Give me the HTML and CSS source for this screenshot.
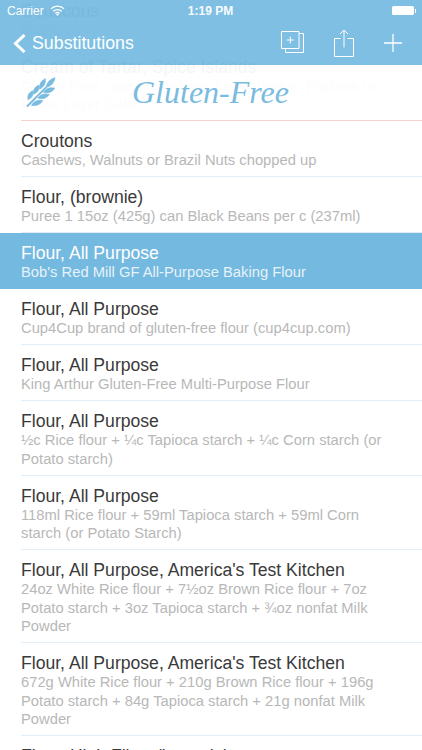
FILE: index.html
```html
<!DOCTYPE html>
<html lang="en">
<head>
<meta charset="utf-8">
<title>Gluten-Free Substitutions</title>
<link rel="stylesheet" href="styles.css">
</head>
<body>
<div class="screen">
  <ul class="list">
    <li class="row"><div class="title">Couscous</div><div class="sub">Quinoa</div></li>
    <li class="row row-cat"><div class="title">Cream of Tartar, Spice Islands</div><div class="sub">Gluten-Free, use with Whites for Meringue, Pavlove or Pillow Layer Cake</div></li>
    <li class="row"><div class="title">Croutons</div><div class="sub">Cashews, Walnuts or Brazil Nuts chopped up</div></li>
    <li class="row"><div class="title">Flour, (brownie)</div><div class="sub">Puree 1 15oz (425g) can Black Beans per c (237ml)</div></li>
    <li class="row selected"><div class="title">Flour, All Purpose</div><div class="sub">Bob's Red Mill GF All-Purpose Baking Flour</div></li>
    <li class="row"><div class="title">Flour, All Purpose</div><div class="sub">Cup4Cup brand of gluten-free flour (cup4cup.com)</div></li>
    <li class="row"><div class="title">Flour, All Purpose</div><div class="sub">King Arthur Gluten-Free Multi-Purpose Flour</div></li>
    <li class="row"><div class="title">Flour, All Purpose</div><div class="sub">½c Rice flour + ¼c Tapioca starch + ¼c Corn starch (or Potato starch)</div></li>
    <li class="row"><div class="title">Flour, All Purpose</div><div class="sub">118ml Rice flour + 59ml Tapioca starch + 59ml Corn starch (or Potato Starch)</div></li>
    <li class="row"><div class="title">Flour, All Purpose, America's Test Kitchen</div><div class="sub">24oz White Rice flour + 7½oz Brown Rice flour + 7oz Potato starch + 3oz Tapioca starch + ¾oz nonfat Milk Powder</div></li>
    <li class="row"><div class="title">Flour, All Purpose, America's Test Kitchen</div><div class="sub">672g White Rice flour + 210g Brown Rice flour + 196g Potato starch + 84g Tapioca starch + 21g nonfat Milk Powder</div></li>
    <li class="row"><div class="title">Flour, High Fiber (brownie)</div></li>
  </ul>

  <header class="top">
    <div class="status">
      <div class="status-left">
        <span>Carrier</span>
        <svg class="wifi" viewBox="0 0 18 13" aria-hidden="true"><path d="M1 4.600a11.500 11.500 0 0 1 16 0M3.800 7.400a7.500 7.500 0 0 1 10.400 0M6.400 10a3.800 3.800 0 0 1 5.200 0" fill="none" stroke="#fff" stroke-width="1.500"/><path d="M9 13l-1.700-2a2.400 2.400 0 0 1 3.400 0z" fill="#fff"/></svg>
      </div>
      <div class="status-time">1:19 PM</div>
      <div class="status-right"><span class="battery"></span><span class="battery-tip"></span></div>
    </div>
    <nav class="nav">
      <a class="back">
        <svg class="chevron" viewBox="0 0 13 19" aria-hidden="true"><path d="M11.500 1L2.500 9.500l9 8.500" fill="none" stroke="#fff" stroke-width="3"/></svg>
        <span>Substitutions</span>
      </a>
      <div class="actions">
        <svg class="ico ico-dup" viewBox="0 0 23 22" aria-hidden="true"><g fill="none" stroke="#fff" stroke-width="1"><path d="M.5.500h17.500v17H.5z"/><path d="M18 2.500h4.500v19h-18v-4"/><path d="M9.250 5.500v7M5.750 9h7"/></g></svg>
        <svg class="ico ico-share" viewBox="0 0 20 28" aria-hidden="true"><g fill="none" stroke="#fff" stroke-width="1"><path d="M6.500 9.500H.5v18h19v-18h-6"/><path d="M10 18.500V1M6 5l4-4 4 4"/></g></svg>
        <svg class="ico ico-plus" viewBox="0 0 18 18" aria-hidden="true"><path d="M9 0v18M0 9h18" fill="none" stroke="#fff" stroke-width="1.300"/></svg>
      </div>
    </nav>
    <div class="banner">
      <svg class="wheat" viewBox="0 0 32 31" aria-hidden="true">
        <path class="stem" d="M1 30L21 10"/>
        <g class="leaves">
          <path d="M20.700 10.300Q28.500 8.300 30 .3Q22.100 2.300 20.700 10.300z"/>
          <path d="M14 12Q20.600 9.100 20 1.300Q13.400 4.100 14 12z"/>
          <path d="M18 15.300Q25.900 17 29.700 11Q21.800 9.300 18 15.300z"/>
          <path d="M8 17Q14.200 15 13.300 8Q7 10 8 17z"/>
          <path d="M12.300 21.300Q20 23.300 24 17.500Q16.200 15.500 12.300 21.300z"/>
          <path d="M2 22.700Q8.200 20.700 7.300 13.700Q1.100 15.700 2 22.700z"/>
          <path d="M5.700 28.700Q13.700 30 17.300 23.700Q9.300 22.400 5.700 28.700z"/>
        </g>
      </svg>
      <span class="brand">Gluten-Free</span>
    </div>
  </header>
</div>
</body>
</html>
```
FILE: styles.css
```css
* { box-sizing: border-box; }
html, body { margin: 0; padding: 0; }
body { background: #fff; font-family: "Liberation Sans", Arial, sans-serif; }
.screen { position: relative; width: 422px; height: 750px; overflow: hidden; background: #fff; }

.list { list-style: none; margin: -9.500px 0 0; padding: 0; }
.row { position: relative; padding: 10px 20px 7.500px 21px; color: #3a3a3a; }
.row::after { content: ""; position: absolute; left: 21px; right: 0; bottom: 0; height: 1px; background: #dfeef7; }
.row-cat::after { background: #f6cfcf; }
.title { font-size: 17.600px; line-height: 20px; }
.sub { font-size: 14.750px; line-height: 18.500px; color: #b8b8b8; }
.selected { background: #74b9df; color: #fff; }
.selected .sub { color: #e6f2fa; }
.selected::after { display: none; }

.top { position: absolute; top: 0; left: 0; right: 0; }
.status { height: 21px; background: rgba(122, 189, 226, .97); display: flex; align-items: center; justify-content: space-between; padding: 0 6px 0 7px; color: #fff; font-size: 12px; position: relative; }
.status-left { display: flex; align-items: center; gap: 6px; }
.wifi { width: 15px; height: 11px; }
.status-time { position: absolute; left: -1px; right: 0; text-align: center; font-weight: bold; opacity: .95; }
.status-right { display: flex; align-items: center; }
.battery { width: 22px; height: 9px; background: #fff; border-radius: 1.500px; }
.battery-tip { width: 1.500px; height: 4px; background: #fff; margin-left: 1px; }

.nav { height: 44px; background: rgba(122, 189, 226, .97); display: flex; align-items: center; justify-content: space-between; padding: 0 20px 0 13px; color: #fff; }
.back { display: flex; align-items: center; gap: 6px; font-size: 17.800px; }
.chevron { width: 13px; height: 19px; }
.actions { display: flex; align-items: center; gap: 30px; }
.ico-dup { width: 23px; height: 22px; margin-top: -2px; }
.ico-share { width: 20px; height: 28px; margin-top: -1px; }
.ico-plus { width: 18px; height: 18px; margin-top: -1px; }

.banner { height: 55px; background: rgba(255, 255, 255, .95); display: flex; align-items: center; padding-left: 26px; }
.wheat { width: 31px; height: 31px; flex: none; }
.stem { fill: none; stroke: #7abbe0; stroke-width: 2; }
.leaves { fill: #7abbe0; stroke: #7abbe0; stroke-width: .8; stroke-linejoin: round; }
.brand { margin-left: 75px; font-family: "Liberation Serif", serif; font-style: italic; font-size: 32px; color: #7abbe0; }
```
